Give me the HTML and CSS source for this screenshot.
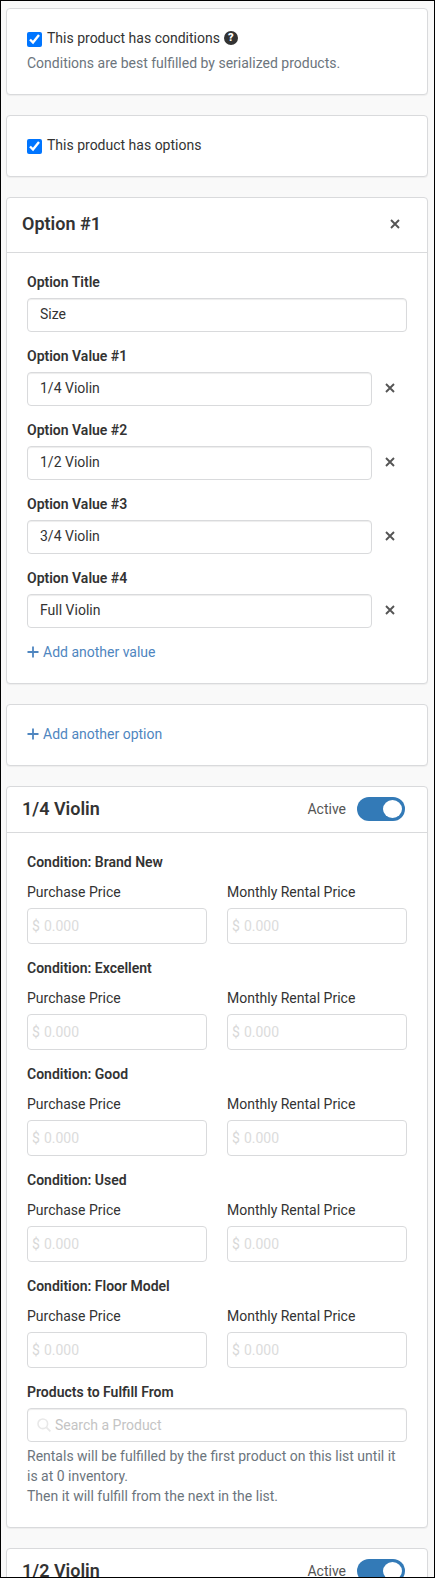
FILE: index.html
```
<!DOCTYPE html>
<html lang="en">
<head>
  <meta charset="UTF-8">
  <meta name="viewport" content="width=device-width, initial-scale=1.0">
  <title>Product Options</title>
  <link rel="stylesheet" href="styles.css">
</head>
<body>
  <!-- shared icons -->
  <svg class="sprite" xmlns="http://www.w3.org/2000/svg">
    <symbol id="icon-close" viewBox="0 0 10 10">
      <path d="M1 1 L9 9 M9 1 L1 9" fill="none" stroke="currentColor" stroke-width="1.9"/>
    </symbol>
    <symbol id="icon-plus" viewBox="0 0 12 12">
      <path d="M6 0.5 V11.5 M0.5 6 H11.5" fill="none" stroke="currentColor" stroke-width="1.8"/>
    </symbol>
    <symbol id="icon-search" viewBox="0 0 14 14">
      <circle cx="5.8" cy="5.8" r="4.8" fill="none" stroke="currentColor" stroke-width="1.6"/>
      <path d="M9.4 9.4 L13.4 13.4" fill="none" stroke="currentColor" stroke-width="1.8"/>
    </symbol>
  </svg>

  <div class="page">
    <div class="card">
      <div class="card-body">
        <label class="check">
          <input type="checkbox" checked>
          <span>This product has conditions</span>
          <span class="help">?</span>
        </label>
        <p class="help-text">Conditions are best fulfilled by serialized products.</p>
      </div>
    </div>

    <div class="card">
      <div class="card-body">
        <label class="check">
          <input type="checkbox" checked>
          <span>This product has options</span>
        </label>
      </div>
    </div>

    <div class="card">
      <div class="card-header option-header">
        <h2>Option #1</h2>
        <button class="close-btn" aria-label="Remove option"><svg><use href="#icon-close"/></svg></button>
      </div>
      <div class="card-body">
        <div class="form-group">
          <label class="title">Option Title</label>
          <input class="form-control" type="text" value="Size">
        </div>
        <div class="form-group">
          <label class="title">Option Value #1</label>
          <div class="value-row">
            <input class="form-control" type="text" value="1/4 Violin">
            <button class="close-btn" aria-label="Remove value"><svg><use href="#icon-close"/></svg></button>
          </div>
        </div>
        <div class="form-group">
          <label class="title">Option Value #2</label>
          <div class="value-row">
            <input class="form-control" type="text" value="1/2 Violin">
            <button class="close-btn" aria-label="Remove value"><svg><use href="#icon-close"/></svg></button>
          </div>
        </div>
        <div class="form-group">
          <label class="title">Option Value #3</label>
          <div class="value-row">
            <input class="form-control" type="text" value="3/4 Violin">
            <button class="close-btn" aria-label="Remove value"><svg><use href="#icon-close"/></svg></button>
          </div>
        </div>
        <div class="form-group">
          <label class="title">Option Value #4</label>
          <div class="value-row">
            <input class="form-control" type="text" value="Full Violin">
            <button class="close-btn" aria-label="Remove value"><svg><use href="#icon-close"/></svg></button>
          </div>
        </div>
        <a class="add-link"><svg><use href="#icon-plus"/></svg>Add another value</a>
      </div>
    </div>

    <div class="card">
      <div class="card-body">
        <a class="add-link"><svg><use href="#icon-plus"/></svg>Add another option</a>
      </div>
    </div>

    <div class="card">
      <div class="card-header">
        <h2>1/4 Violin</h2>
        <label class="toggle"><span>Active</span><span class="switch"></span></label>
      </div>
      <div class="card-body">
        <div class="form-group">
          <h3 class="title">Condition: Brand New</h3>
          <div class="prices">
            <div>
              <label>Purchase Price</label>
              <div class="money"><span>$</span><input type="text" placeholder="0.000"></div>
            </div>
            <div>
              <label>Monthly Rental Price</label>
              <div class="money"><span>$</span><input type="text" placeholder="0.000"></div>
            </div>
          </div>
        </div>
        <div class="form-group">
          <h3 class="title">Condition: Excellent</h3>
          <div class="prices">
            <div>
              <label>Purchase Price</label>
              <div class="money"><span>$</span><input type="text" placeholder="0.000"></div>
            </div>
            <div>
              <label>Monthly Rental Price</label>
              <div class="money"><span>$</span><input type="text" placeholder="0.000"></div>
            </div>
          </div>
        </div>
        <div class="form-group">
          <h3 class="title">Condition: Good</h3>
          <div class="prices">
            <div>
              <label>Purchase Price</label>
              <div class="money"><span>$</span><input type="text" placeholder="0.000"></div>
            </div>
            <div>
              <label>Monthly Rental Price</label>
              <div class="money"><span>$</span><input type="text" placeholder="0.000"></div>
            </div>
          </div>
        </div>
        <div class="form-group">
          <h3 class="title">Condition: Used</h3>
          <div class="prices">
            <div>
              <label>Purchase Price</label>
              <div class="money"><span>$</span><input type="text" placeholder="0.000"></div>
            </div>
            <div>
              <label>Monthly Rental Price</label>
              <div class="money"><span>$</span><input type="text" placeholder="0.000"></div>
            </div>
          </div>
        </div>
        <div class="form-group">
          <h3 class="title">Condition: Floor Model</h3>
          <div class="prices">
            <div>
              <label>Purchase Price</label>
              <div class="money"><span>$</span><input type="text" placeholder="0.000"></div>
            </div>
            <div>
              <label>Monthly Rental Price</label>
              <div class="money"><span>$</span><input type="text" placeholder="0.000"></div>
            </div>
          </div>
        </div>
        <label class="title">Products to Fulfill From</label>
        <div class="form-control search">
          <svg><use href="#icon-search"/></svg>
          <input type="text" placeholder="Search a Product">
        </div>
        <p class="help-text">Rentals will be fulfilled by the first product on this list until it is at 0 inventory.<br>Then it will fulfill from the next in the list.</p>
      </div>
    </div>

    <div class="card">
      <div class="card-header">
        <h2>1/2 Violin</h2>
        <label class="toggle"><span>Active</span><span class="switch"></span></label>
      </div>
    </div>
  </div>
</body>
</html>
```
FILE: styles.css
```
* {
  box-sizing: border-box;
}
body {
  margin: 0;
  font-family: Roboto, Arial, sans-serif;
  font-size: 14px;
  line-height: 20px;
  color: #333;
}
.sprite {
  display: none;
}
.page {
  height: 1578px;
  padding: 7px 6px 0 5px;
  border: 1px solid #000;
  background-color: #f9f9f9;
  overflow: hidden;
}
.card {
  margin-bottom: 20px;
  background-color: #fff;
  border: 1px solid #d9dadc;
  border-radius: 4px;
  box-shadow: 0 1px 1px rgba(0, 0, 0, 0.05);
}
.card-header {
  display: flex;
  align-items: center;
  justify-content: space-between;
  height: 46px;
  padding: 0 22px 0 15px;
  border-bottom: 1px solid #d9dadc;
}
.option-header {
  height: 55px;
}
.card-body {
  padding: 20px;
}
h2 {
  margin: 0;
  padding-bottom: 2px;
  font-size: 18px;
  font-weight: 600;
}
input {
  font: inherit;
  color: inherit;
}
label {
  display: block;
  margin-bottom: 7px;
  line-height: 18px;
}
.title {
  margin: 0 0 7px;
  font-size: 14px;
  font-weight: 600;
  line-height: 18px;
}
h3.title {
  margin-bottom: 12px;
}
.form-group {
  margin-bottom: 15px;
}
.check {
  display: flex;
  align-items: center;
  height: 20px;
  margin: 0;
}
.check input {
  width: 15px;
  height: 15px;
  margin: 1px 5px 0 0;
}
.check span {
  margin-top: -2px;
}
.check .help {
  width: 14px;
  height: 14px;
  margin: -3px 0 0 4px;
  border-radius: 50%;
  background-color: #333;
  color: #fff;
  font-size: 11px;
  font-weight: 900;
  line-height: 14px;
  text-align: center;
}
.help-text {
  margin: 4px 0 1px;
  color: #6c757d;
}
.form-control {
  display: block;
  width: 100%;
  height: 34px;
  padding: 5px 12px 7px;
  border: 1px solid #d9dadc;
  border-radius: 4px;
  background-color: #fff;
  box-shadow: inset 0 1px 1px rgba(0, 0, 0, 0.075);
}
.value-row {
  display: flex;
  align-items: center;
}
.value-row .form-control {
  width: 345px;
}
.close-btn {
  display: flex;
  padding: 5px;
  margin-bottom: 2px;
  border: none;
  background: none;
  color: #555;
  cursor: pointer;
}
.close-btn svg {
  width: 10px;
  height: 10px;
}
.value-row .close-btn {
  margin: 0 0 2px 8px;
}
.add-link {
  display: flex;
  align-items: center;
  gap: 4px;
  height: 20px;
  padding-bottom: 2px;
  color: #4f86c0;
  cursor: pointer;
}
.add-link svg {
  width: 12px;
  height: 12px;
}
.toggle {
  display: flex;
  align-items: center;
  gap: 11px;
  margin: 0 0 1px;
  color: #555;
}
.switch {
  display: flex;
  justify-content: flex-end;
  width: 48px;
  height: 24px;
  padding: 3px;
  border-radius: 12px;
  background-color: #337ab7;
}
.switch::after {
  content: '';
  width: 19px;
  height: 18px;
  border-radius: 50%;
  background-color: #fff;
}
.prices {
  display: grid;
  grid-template-columns: 1fr 1fr;
  gap: 20px;
}
.money {
  display: flex;
  align-items: center;
  gap: 4px;
  height: 36px;
  padding: 0 4px;
  border: 1px solid #d9dadc;
  border-radius: 4px;
  color: #d8d8d8;
}
.money input,
.search input {
  width: 100%;
  min-width: 0;
  padding: 0;
  border: none;
  outline: none;
  background: none;
}
.money input::placeholder {
  color: #dcdcdc;
}
.search {
  display: flex;
  align-items: center;
  gap: 4px;
  padding: 0 9px;
}
.search svg {
  flex: none;
  width: 14px;
  height: 14px;
  color: #e8e8e8;
}
.search input::placeholder {
  color: #c4c4c4;
}
```
